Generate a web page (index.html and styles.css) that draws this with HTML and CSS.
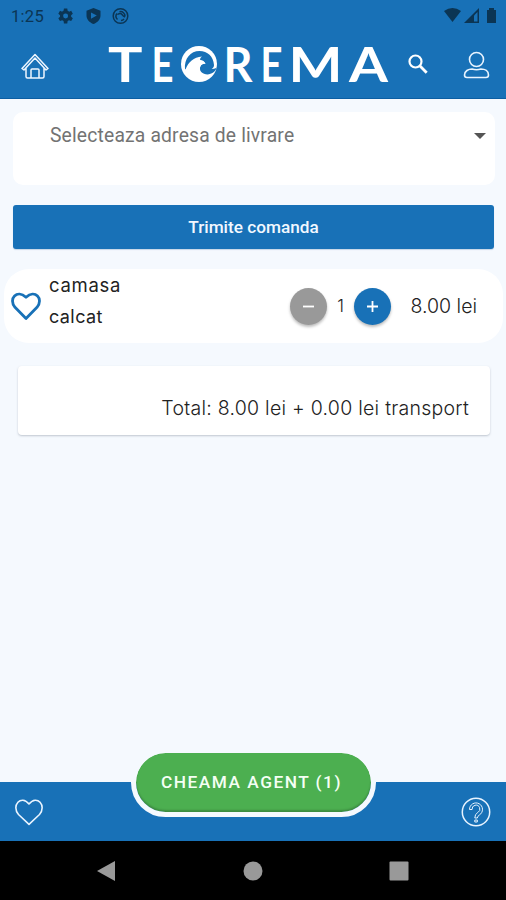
FILE: index.html
```html
<!DOCTYPE html>
<html lang="ro">
<head>
<meta charset="utf-8">
<title>Teorema</title>
<link rel="stylesheet" href="styles.css">
</head>
<body>
<div class="app">
  <header class="header">
    <div class="status">
      <span class="clock">1:25</span>
      <svg class="status-left" width="74" height="18" viewBox="0 0 74 18">
        <g transform="translate(-1,-1) scale(.83)"><path d="M19.4 13c.1-.6.1-1.400 0-2l2.100-1.700-2-3.500-2.600 1a8 8 0 0 0-1.700-1L14.800 3h-4l-.5 2.800a8 8 0 0 0-1.700 1L6 5.800l-2 3.500L6.100 11c-.1.600-.1 1.400 0 2L4 14.700l2 3.500 2.600-1 1.700 1 .5 2.800h4l.4-2.800 1.700-1 2.600 1 2-3.500zM12.800 15a3 3 0 1 1 0-6 3 3 0 0 1 0 6z" fill="currentColor" fill-rule="evenodd"/></g>
        <path d="M37.500 1l7 2.700v5c0 3.600-3 6.700-7 8.300-4-1.600-7-4.700-7-8.300v-5zM35 5.500v6.300l5.800-3.200z" fill="currentColor" fill-rule="evenodd"/>
        <g fill="none" stroke="currentColor" stroke-width="1.500"><circle cx="64.500" cy="9" r="7.300"/><path d="M61.500 12.500a4.500 4.500 0 0 1-.5-6M63.500 4.700a4.500 4.500 0 0 1 5.500 4.800M68 12a4.500 4.500 0 0 1-3 1.500M61.500 7.500q3-2 4.500 0t3 2.500"/></g>
      </svg>
      <svg class="status-right" width="56" height="18" viewBox="0 0 56 18">
        <path d="M1 4Q9.500-2 18 4L9.500 15z" fill="currentColor"/>
        <path d="M36 1v15H21z" fill="currentColor"/><path d="M34.500 5v9.500H31V8.500z" fill="#1871b7"/>
        <path d="M44 3h2V1h5v2h2v13h-9z" fill="currentColor"/>
      </svg>
    </div>
    <div class="brandbar">
      <svg class="home" width="28" height="26" viewBox="0 0 28 26" fill="none" stroke="#eef6ff" stroke-width="1.500" stroke-linejoin="round"><path d="M1 15.500L14 1.500l13 14-2 1.500L14 5 3 17zM5 15v8.500q0 1.500 1.500 1.500h15q1.500 0 1.500-1.500V15M10 25v-8q0-1 1-1h6q1 0 1 1v8"/></svg>
      <svg class="logo" width="284" height="66" viewBox="0 -12 284 66">
        <g class="logo-text">
          <text x="1" y="39" textLength="34.500" lengthAdjust="spacingAndGlyphs">T</text>
          <text x="44.500" y="39" textLength="22" lengthAdjust="spacingAndGlyphs">E</text>
          <text x="116.500" y="39" textLength="29" lengthAdjust="spacingAndGlyphs">R</text>
          <text x="153.500" y="39" textLength="22" lengthAdjust="spacingAndGlyphs">E</text>
          <text x="181.500" y="39" textLength="54" lengthAdjust="spacingAndGlyphs">M</text>
          <text x="242" y="39" textLength="39" lengthAdjust="spacingAndGlyphs">A</text>
        </g>
        <circle cx="92" cy="21" r="18" fill="#fff"/>
        <path d="M78 26.500C77 15.500 83.500 8 92.500 8c8 0 14 5.500 14.500 14 .1 2-.8 3-2.500 3.800 2 .5 4-.3 5.500-1.500-2 5.500-7.500 8.500-13 6.500-4-1.500-5-5-3.300-8 1-1.800 3-2.500 4.800-2-1.700-3.500-5.800-4-9-1.500-5.500 3.800-8 5-11.500 7.200z" fill="#1871b7"/>
        <path d="M78.500 26.500c3-8 8-12 16.500-13-2 1.500-2 2.500-1.800 3.500 2.500.2 4.300 1.500 5.300 3.800-4-.5-6.300 2.500-5.300 5.800l-7 4z" fill="#fff"/>
      </svg>
      <svg class="search" width="20" height="20" viewBox="0 0 20 20" fill="none" stroke="#fff"><circle cx="7.500" cy="7.500" r="6" stroke-width="2.200"/><path d="M12 12l6.700 6.700" stroke-width="2.800"/></svg>
      <svg class="user" width="27" height="28" viewBox="0 0 27 28" fill="none" stroke="#e9f4ff" stroke-width="1.600"><circle cx="13.500" cy="8.500" r="7"/><path d="M4 26.500q-2.500 0-2.500-2.500c0-4 4-6 7.500-6q4.500 1.500 9 0c4 0 7.500 2 7.500 6q0 2.500-2.500 2.500z" stroke-linejoin="round"/></svg>
    </div>
  </header>

  <main class="content">
    <section class="address">
      <span>Selecteaza adresa de livrare</span>
      <i class="caret"></i>
    </section>
    <button class="send">Trimite comanda</button>
    <section class="item">
      <svg class="item-heart" width="32" height="30" viewBox="0 0 32 30"><path d="M16 27.500L5 16.300C-2 8 7-2 16 6.300 25-2 34 8 27 16.300z" fill="none" stroke="#1871b7" stroke-width="2.800" stroke-linejoin="round"/></svg>
      <div class="item-name"><span class="name-main">camasa</span><span class="name-type">calcat</span></div>
      <button class="round minus" aria-label="minus"><svg width="13" height="13" viewBox="0 0 13 13"><path d="M1 6.500h11"/></svg></button>
      <span class="qty">1</span>
      <button class="round plus" aria-label="plus"><svg width="13" height="13" viewBox="0 0 13 13"><path d="M1 6.500h11M6.500 1v11"/></svg></button>
      <span class="price">8.00 lei</span>
    </section>
    <section class="total"><span>Total: 8.00 lei + 0.00 lei transport</span></section>
  </main>

  <footer class="footer">
    <svg width="30" height="28" viewBox="0 0 30 28"><path d="M15 26.300L4.500 16.500C-3 8 7-4 15 6 23-4 33 8 25.500 16.500z" fill="none" stroke="#e9f4ff" stroke-width="1.600" stroke-linejoin="round"/></svg>
    <button class="agent">CHEAMA AGENT (1)</button>
    <svg width="30" height="30" viewBox="0 0 30 30" fill="none" stroke="#e9f4ff" stroke-width="1.500"><circle cx="15" cy="15" r="13.700"/><path d="M8.500 12.500a6.500 6.500 0 1 1 10 5.400q-2 1.300-2.200 3.100h-2.500q0-4 3-5.500a3.900 3.900 0 1 0-5.700-3zM13.800 23h2.500v2h-2.500z" stroke-width="1"/></svg>
  </footer>
  <nav class="sysnav">
    <svg width="20" height="22" viewBox="0 0 20 22"><path d="M1 11L19 1v20z"/></svg>
    <svg width="20" height="20" viewBox="0 0 20 20"><circle cx="10" cy="10" r="9.500"/></svg>
    <svg width="20" height="20" viewBox="0 0 20 20"><rect x=".5" y=".5" width="19" height="19" rx="1"/></svg>
  </nav>
</div>
</body>
</html>
```
FILE: styles.css
```css
* { box-sizing: border-box; }
body { margin: 0; background: #f5f9fe; }
svg { display: block; flex: none; }
button { border: 0; padding: 0; }
.app { width: 506px; height: 900px; display: flex; flex-direction: column; font-family: Roboto, sans-serif; background: #f5f9fe; overflow: hidden; }

.header { height: 99px; flex: none; background: #1871b7; border-bottom: 1px solid #0b5ea3; }
.status { height: 32px; display: flex; align-items: center; padding: 0 7px 0 11px; color: #0b3554; }
.clock { width: 45px; font-size: 16.500px; letter-spacing: .3px; }
.status-right { margin-left: auto; }
.brandbar { height: 66px; display: flex; align-items: center; padding-left: 21px; }
.home { margin-top: 2px; }
.logo { margin-left: 58px; margin-top: -2px; overflow: visible; }
.logo-text { font: 700 48px Lato, sans-serif; fill: #fff; }
.search { margin-left: 17px; margin-top: -2px; }
.user { margin-left: 35px; }

.content { flex: 1; padding-top: 13px; display: flex; flex-direction: column; }
.address { height: 73px; margin: 0 11px 0 13px; padding: 12px 9px 0 37px; display: flex; justify-content: space-between; background: #fff; border-radius: 10px; color: #737373; font-size: 19.300px; line-height: 23px; letter-spacing: .17px; }
.caret { width: 0; height: 0; margin-top: 9px; border: 6px solid transparent; border-top-color: #555; border-bottom: 0; }
.send { height: 44px; margin: 20px 12px 0 13px; border-radius: 3px; background: #1871b7; color: #f2f8ff; font: 500 17.200px Roboto, sans-serif; box-shadow: 0 1px 1px #c5d5e7; }
.item { height: 74px; margin: 20px 3px 0 4px; padding: 0 26px 0 6px; display: flex; align-items: center; background: #fff; border-radius: 25px; font-family: Inter, sans-serif; color: #222; }
.item-heart { margin-top: -1px; }
.item-name { width: 242px; height: 74px; padding: 1px 0 0 7px; display: flex; flex-direction: column; font-size: 18px; line-height: 31px; letter-spacing: .4px; }
.name-main { font-size: 18.500px; letter-spacing: .7px; }
.round { width: 37px; height: 37px; flex: none; border-radius: 50%; display: grid; place-items: center; box-shadow: 0 2px 3px #0004; }
.round path { fill: none; stroke: #fff; stroke-width: 1.800; }
.minus { margin-left: 6px; background: #999; }
.plus { background: #1871b7; }
.qty { width: 27px; text-align: center; font-size: 17px; font-weight: 300; }
.price { margin-left: auto; font-size: 19.500px; white-space: nowrap; font-weight: 300; }
.total { height: 69px; margin: 23px 16px 0 18px; padding: 30px 21px 0 0; text-align: right; background: #fff; border-radius: 4px; box-shadow: 0 1px 2px #8c96a480; font: 300 19.500px/24px Inter, sans-serif; letter-spacing: .26px; color: #222; white-space: nowrap; }

.footer { height: 59px; flex: none; display: flex; align-items: center; justify-content: space-between; padding: 0 15px 0 14px; background: #1871b7; }
.agent { width: 245px; height: 69px; align-self: flex-start; margin: -34px 0 0 1px; padding: 0 3px 1px 0; border: 5px solid #f5f9fe; border-radius: 35px; background: #4caf50; background-clip: padding-box; color: #f4fff4; font: 500 17.300px Roboto, sans-serif; letter-spacing: 1.500px; box-shadow: inset 0 -2px 2px #0003; }
.sysnav { height: 59px; flex: none; background: #000; display: flex; align-items: center; justify-content: space-between; padding: 0 97px 0 96px; fill: #999; }
```
